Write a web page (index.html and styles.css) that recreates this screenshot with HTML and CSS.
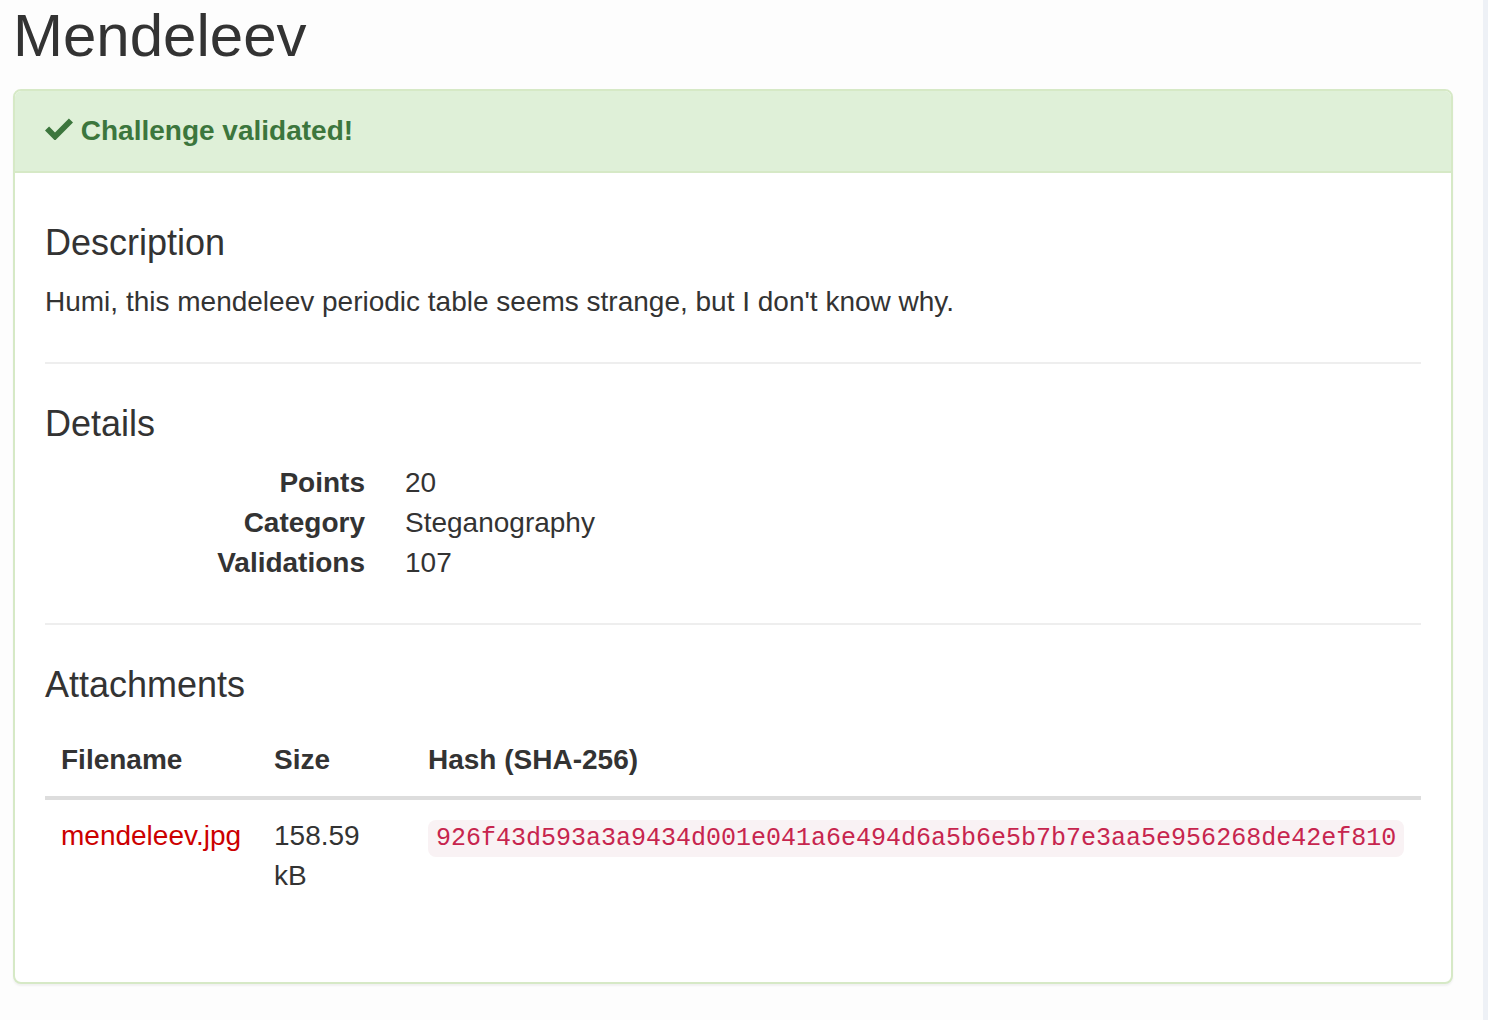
FILE: index.html
```html
<!DOCTYPE html>
<html lang="en">
<head>
<meta charset="utf-8">
<title>Mendeleev</title>
<link rel="stylesheet" href="styles.css">
</head>
<body>
<div class="page">
  <main class="main">
    <h1 class="title">Mendeleev</h1>
    <section class="panel">
      <div class="panel-heading">
        <svg class="check" width="28" height="23" viewBox="0 0 28 23" aria-hidden="true"><path d="M0 13.6 L4.1 9.5 L10 15.4 L23.9 1.5 L28 5.6 L10 23.6 Z" fill="#3c763d"/></svg> Challenge validated!
      </div>
      <div class="panel-body">
        <h3 class="section-title first">Description</h3>
        <p class="desc">Humi, this mendeleev periodic table seems strange, but I don't know why.</p>
        <hr class="sep">
        <h3 class="section-title">Details</h3>
        <dl class="details">
          <dt>Points</dt><dd>20</dd>
          <dt>Category</dt><dd>Steganography</dd>
          <dt>Validations</dt><dd>107</dd>
        </dl>
        <hr class="sep">
        <h3 class="section-title">Attachments</h3>
        <table class="files">
          <thead>
            <tr><th class="c-name">Filename</th><th class="c-size">Size</th><th>Hash (SHA-256)</th></tr>
          </thead>
          <tbody>
            <tr>
              <td><a class="file-link" href="#">mendeleev.jpg</a></td>
              <td>158.59 kB</td>
              <td><code class="hash">926f43d593a3a9434d001e041a6e494d6a5b6e5b7b7e3aa5e956268de42ef810</code></td>
            </tr>
          </tbody>
        </table>
      </div>
    </section>
  </main>
  <aside class="strip"></aside>
</div>
</body>
</html>
```
FILE: styles.css
```css
html, body {
  margin: 0;
  padding: 0;
}
body {
  font-family: "Liberation Sans", Arial, sans-serif;
  font-size: 28px;
  line-height: 40px;
  color: #333;
  background: #fdfdfd;
}
.page {
  display: flex;
  min-height: 1020px;
}
.main {
  flex: 1;
  padding: 0 30px 0 13px;
}
.strip {
  width: 5px;
  background: #eef1f6;
}
.title {
  font-size: 60px;
  font-weight: 400;
  line-height: 66px;
  margin: 3px 0 20px 0;
  color: #333;
}
.panel {
  background: #fff;
  border: 2px solid #d6e9c6;
  border-radius: 8px;
  box-shadow: 0 2px 2px rgba(0, 0, 0, 0.05);
}
.panel-heading {
  background: #dff0d8;
  color: #3c763d;
  font-weight: 700;
  padding: 20px 30px;
  border-bottom: 2px solid #d6e9c6;
  border-radius: 6px 6px 0 0;
}
.check {
  vertical-align: baseline;
}
.panel-body {
  padding: 30px;
}
.section-title {
  font-size: 36px;
  font-weight: 400;
  line-height: 39px;
  margin: 40px 0 20px;
}
.section-title.first {
  margin-top: 20px;
}
.desc {
  margin: 0 0 20px;
}
.sep {
  border: 0;
  border-top: 2px solid #eee;
  margin: 40px 0;
}
.details {
  display: grid;
  grid-template-columns: 320px 1fr;
  column-gap: 40px;
  margin: 0 0 40px;
}
.details dt {
  font-weight: 700;
  text-align: right;
}
.details dd {
  margin: 0;
}
.files {
  width: 100%;
  border-collapse: collapse;
  border-spacing: 0;
  table-layout: fixed;
  margin: 20px 0 40px;
}
.files th {
  text-align: left;
  font-weight: 700;
  padding: 16px;
  border-bottom: 4px solid #ddd;
  vertical-align: bottom;
}
.files td {
  padding: 16px;
  vertical-align: top;
}
.c-name { width: 181px; }
.c-size { width: 122px; }
.file-link {
  color: #c00;
  text-decoration: none;
}
.hash {
  font-family: "Liberation Mono", "Courier New", monospace;
  font-size: 25px;
  color: #c7254e;
  background: #f9f2f4;
  border-radius: 8px;
  padding: 4px 8px;
  white-space: nowrap;
}
```
